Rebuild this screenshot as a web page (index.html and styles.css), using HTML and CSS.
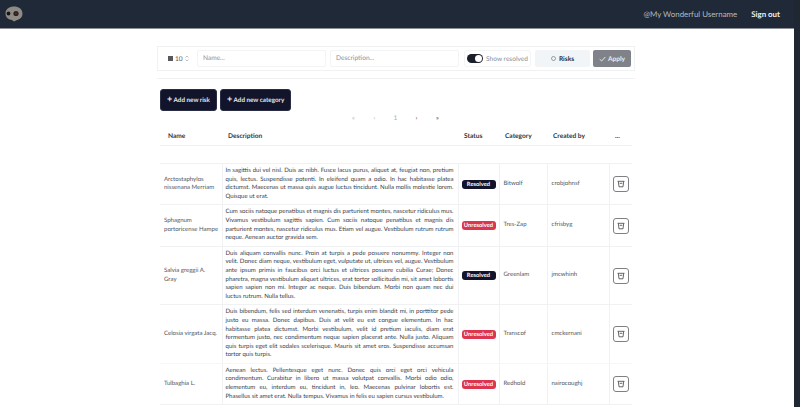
FILE: index.html
```html
<!DOCTYPE html>
<html lang="en">
<head>
    <meta charset="UTF-8">
    <meta name="viewport" content="width=device-width, initial-scale=1.0">
    <title>Risks</title>
    <link rel="stylesheet" href="styles.css">
</head>
<body>
    <nav class="navbar">
        <svg class="logo" width="20" height="20" viewBox="0 0 20 20">
            <path d="M1.500 9.500c0-4.500 4-7 8.500-7s8.500 2.500 8.500 7c0 4-3 6-5.500 6.500l-3 1.500-2-1.500c-3-.5-6.500-2-6.500-6.500z" fill="#8f8a84"/>
            <circle cx="4.500" cy="9.500" r="1.900" fill="#14161a"/>
            <circle cx="12" cy="9.500" r="2.600" fill="#2a2022"/>
            <circle cx="12" cy="9.500" r="1" fill="#5a3030"/>
        </svg>
        <div class="nav-right">
            <span class="username">@My Wonderful Username</span>
            <a class="signout">Sign out</a>
        </div>
    </nav>
    <div class="scrollbar"></div>

    <main class="content">
        <div class="filters">
            <div class="page-size">
                <svg width="5" height="5" viewBox="0 0 5 5"><rect width="5" height="5" fill="#55585c"/></svg>
                <span>10</span>
                <svg width="4" height="7" viewBox="0 0 4 7"><path d="M.5 2.500 2 1l1.500 1.500M.5 4.500 2 6l1.500-1.500" fill="none" stroke="#999" stroke-width=".6"/></svg>
            </div>
            <div class="text-filter">Name...</div>
            <div class="text-filter">Description...</div>
            <div class="toggle-box">
                <span class="toggle"><span class="knob"></span></span>
                <span>Show resolved</span>
            </div>
            <div class="risks-btn">
                <svg width="5" height="5" viewBox="0 0 5 5"><circle cx="2.500" cy="2.500" r="2" fill="none" stroke="#666" stroke-width=".6"/></svg>
                <b>Risks</b>
            </div>
            <div class="apply-btn">
                <svg width="7" height="6" viewBox="0 0 7 6"><path d="M.7 3.200 2.600 5 6.300 1" fill="none" stroke="#e8e8e8" stroke-width="1"/></svg>
                <b>Apply</b>
            </div>
        </div>
        <hr class="divider">

        <div class="actions">
            <button class="dark-btn"><span class="plus">+</span> Add new risk</button>
            <button class="dark-btn"><span class="plus">+</span> Add new category</button>
        </div>

        <div class="pagination">
            <span class="off">«</span>
            <span class="off">‹</span>
            <span class="off">1</span>
            <span>›</span>
            <span>»</span>
        </div>

        <table class="risks">
            <colgroup>
                <col class="c-name"><col class="c-desc"><col class="c-status"><col class="c-cat"><col class="c-user"><col class="c-act">
            </colgroup>
            <thead>
                <tr>
                    <th class="th-name">Name</th>
                    <th>Description</th>
                    <th>Status</th>
                    <th>Category</th>
                    <th>Created by</th>
                    <th>...</th>
                </tr>
            </thead>
            <tbody>
                <tr class="spacer"><td colspan="6"></td></tr>
                <tr>
                    <td>Arctostaphylos nissenana Merriam</td>
                    <td class="desc">In sagittis dui vel nisl. Duis ac nibh. Fusce lacus purus, aliquet at, feugiat non, pretium quis, lectus. Suspendisse potenti. In eleifend quam a odio. In hac habitasse platea dictumst. Maecenas ut massa quis augue luctus tincidunt. Nulla mollis molestie lorem. Quisque ut erat.</td>
                    <td><span class="badge resolved">Resolved</span></td>
                    <td>Bitwolf</td>
                    <td>crobjohnsf</td>
                    <td class="act"><button class="del"><svg width="8" height="8" viewBox="0 0 8 8"><path d="M.6 1.300h6.800M1.300 1.300l.7 5.500h4l.7-5.500M2.700 3.300h2.600" fill="none" stroke="#555" stroke-width=".9"/></svg></button></td>
                </tr>
                <tr>
                    <td>Sphagnum portoricense Hampe</td>
                    <td class="desc">Cum sociis natoque penatibus et magnis dis parturient montes, nascetur ridiculus mus. Vivamus vestibulum sagittis sapien. Cum sociis natoque penatibus et magnis dis parturient montes, nascetur ridiculus mus. Etiam vel augue. Vestibulum rutrum rutrum neque. Aenean auctor gravida sem.</td>
                    <td><span class="badge unresolved">Unresolved</span></td>
                    <td>Tres-Zap</td>
                    <td>cfrisbyg</td>
                    <td class="act"><button class="del"><svg width="8" height="8" viewBox="0 0 8 8"><path d="M.6 1.300h6.800M1.300 1.300l.7 5.500h4l.7-5.500M2.700 3.300h2.600" fill="none" stroke="#555" stroke-width=".9"/></svg></button></td>
                </tr>
                <tr>
                    <td>Salvia greggii A. Gray</td>
                    <td class="desc">Duis aliquam convallis nunc. Proin at turpis a pede posuere nonummy. Integer non velit. Donec diam neque, vestibulum eget, vulputate ut, ultrices vel, augue. Vestibulum ante ipsum primis in faucibus orci luctus et ultrices posuere cubilia Curae; Donec pharetra, magna vestibulum aliquet ultrices, erat tortor sollicitudin mi, sit amet lobortis sapien sapien non mi. Integer ac neque. Duis bibendum. Morbi non quam nec dui luctus rutrum. Nulla tellus.</td>
                    <td><span class="badge resolved">Resolved</span></td>
                    <td>Greenlam</td>
                    <td>jmcwhinh</td>
                    <td class="act"><button class="del"><svg width="8" height="8" viewBox="0 0 8 8"><path d="M.6 1.300h6.800M1.300 1.300l.7 5.500h4l.7-5.500M2.700 3.300h2.600" fill="none" stroke="#555" stroke-width=".9"/></svg></button></td>
                </tr>
                <tr class="no-line">
                    <td>Celosia virgata Jacq.</td>
                    <td class="desc">Duis bibendum, felis sed interdum venenatis, turpis enim blandit mi, in porttitor pede justo eu massa. Donec dapibus. Duis at velit eu est congue elementum. In hac habitasse platea dictumst. Morbi vestibulum, velit id pretium iaculis, diam erat fermentum justo, nec condimentum neque sapien placerat ante. Nulla justo. Aliquam quis turpis eget elit sodales scelerisque. Mauris sit amet eros. Suspendisse accumsan tortor quis turpis.</td>
                    <td><span class="badge unresolved">Unresolved</span></td>
                    <td>Transcof</td>
                    <td>cmckernani</td>
                    <td class="act"><button class="del"><svg width="8" height="8" viewBox="0 0 8 8"><path d="M.6 1.300h6.800M1.300 1.300l.7 5.500h4l.7-5.500M2.700 3.300h2.600" fill="none" stroke="#555" stroke-width=".9"/></svg></button></td>
                </tr>
                <tr>
                    <td>Tulbaghia L.</td>
                    <td class="desc">Aenean lectus. Pellentesque eget nunc. Donec quis orci eget orci vehicula condimentum. Curabitur in libero ut massa volutpat convallis. Morbi odio odio, elementum eu, interdum eu, tincidunt in, leo. Maecenas pulvinar lobortis est. Phasellus sit amet erat. Nulla tempus. Vivamus in felis eu sapien cursus vestibulum.</td>
                    <td><span class="badge unresolved">Unresolved</span></td>
                    <td>Redhold</td>
                    <td>nairocoughj</td>
                    <td class="act"><button class="del"><svg width="8" height="8" viewBox="0 0 8 8"><path d="M.6 1.300h6.800M1.300 1.300l.7 5.500h4l.7-5.500M2.700 3.300h2.600" fill="none" stroke="#555" stroke-width=".9"/></svg></button></td>
                </tr>
            </tbody>
        </table>
    </main>
</body>
</html>
```

FILE: styles.css
```css
body {
    font-family: Lato, "Noto Sans", sans-serif;
    text-rendering: geometricPrecision;
    margin: 0;
    background-color: white;
    color: #3c4149;
    font-size: 6.6px;
}
.navbar {
    display: flex;
    justify-content: space-between;
    align-items: center;
    height: 28px;
    padding: 0 20px 0 4px;
    background-color: #1f2937;
    border-bottom: 1px solid #8a9096;
}
.logo {
    margin-top: -1px;
}
.nav-right {
    display: flex;
    align-items: center;
    gap: 14px;
    font-size: 7.900px;
}
.username {
    color: #b4bac2;
}
.signout {
    color: #eef0f2;
    font-weight: 700;
}
.scrollbar {
    position: fixed;
    top: 0;
    right: 0;
    bottom: 0;
    width: 6px;
    background-color: #1f2733;
}
.content {
    width: 478px;
    margin-left: 157px;
    padding-top: 17px;
}
.filters {
    display: flex;
    align-items: center;
    gap: 4px;
    height: 25px;
    padding: 0 3px;
    box-sizing: border-box;
    border: 1px solid #f0f1f2;
    color: #8a8f96;
}
.page-size {
    display: flex;
    align-items: center;
    gap: 2px;
    width: 32px;
    padding-left: 7px;
    box-sizing: border-box;
    color: #55585c;
}
.text-filter {
    width: 129px;
    height: 17px;
    line-height: 15px;
    padding-left: 5px;
    box-sizing: border-box;
    border: 1px solid #f3f4f5;
    border-radius: 2px;
}
.toggle-box {
    display: flex;
    align-items: center;
    gap: 3px;
    width: 67px;
    height: 17px;
    padding-left: 2px;
    margin-left: 1px;
    box-sizing: border-box;
    border: 1px solid #f3f4f5;
    border-radius: 3px;
    white-space: nowrap;
}
.toggle {
    display: flex;
    justify-content: flex-end;
    align-items: center;
    width: 16px;
    height: 9px;
    padding: 1px;
    box-sizing: border-box;
    background-color: #1b1f2a;
    border-radius: 5px;
}
.knob {
    width: 7px;
    height: 7px;
    background-color: white;
    border-radius: 50%;
}
.risks-btn {
    display: flex;
    justify-content: center;
    align-items: center;
    gap: 3px;
    width: 55px;
    height: 17px;
    background-color: #f1f5f8;
    color: #2b2f36;
    border-radius: 2px;
}
.apply-btn {
    display: flex;
    justify-content: center;
    align-items: center;
    gap: 2px;
    width: 38px;
    height: 17px;
    margin-left: -1px;
    background-color: #7f8389;
    color: #ececec;
    border-radius: 2px;
}
.divider {
    border: 0;
    border-top: 1px solid #f0f1f2;
    margin: 7px 0 0;
}
.actions {
    display: flex;
    gap: 3px;
    margin: 10px 0 0 3px;
}
.dark-btn {
    height: 22px;
    padding: 0 6px;
    border: 1px solid #2a2e44;
    border-radius: 3px;
    background-color: #11142a;
    color: #e6e8ee;
    font-family: inherit;
    font-size: 6.300px;
    font-weight: 700;
    text-rendering: geometricPrecision;
}
.plus {
    font-size: 9px;
    line-height: 6px;
}
.pagination {
    display: flex;
    justify-content: center;
    gap: 15px;
    margin: 3px 0 0 -1px;
    height: 9px;
    line-height: 9px;
    color: #33373d;
}
.pagination span {
    width: 6px;
    text-align: center;
}
.pagination .off {
    color: #a8acb2;
}
.risks {
    width: 472px;
    margin: 4px 0 0 3px;
    border-collapse: collapse;
    table-layout: fixed;
    font-size: 6.050px;
}
.c-name { width: 62px; }
.c-desc { width: 236px; }
.c-status { width: 41px; }
.c-cat { width: 48px; }
.c-user { width: 62px; }
.c-act { width: 23px; }
th {
    height: 18px;
    padding: 0 0 0 6px;
    text-align: left;
    font-size: 6.600px;
    font-weight: 700;
    color: #33373d;
    border-bottom: 1px solid #f0f1f2;
}
.th-name {
    padding-left: 8px;
}
td {
    padding: 0 3px 0 4px;
    line-height: 8.600px;
    border-bottom: 1px solid #f0f1f2;
    border-left: 1px solid #f0f1f2;
    color: #51565e;
}
td:first-child {
    border-left: 0;
}
.no-line td {
    border-bottom-color: #f6f6f7;
}
.spacer td {
    height: 17px;
    padding: 0;
    border-left: 0;
}
.desc {
    padding: 3px 4px 3px 3px;
    text-align: justify;
    color: #3c4149;
}
.act {
    padding: 0 0 0 3px;
}
.badge {
    display: block;
    width: 34px;
    height: 9px;
    margin-left: -1px;
    line-height: 9px;
    text-align: center;
    font-size: 5.800px;
    font-weight: 700;
    color: white;
    border-radius: 3px;
}
.resolved {
    background-color: #11142a;
}
.unresolved {
    background-color: #dc3550;
}
.del {
    display: flex;
    justify-content: center;
    align-items: center;
    width: 16px;
    height: 16px;
    padding: 0;
    background: white;
    border: 1px solid #7d8084;
    border-radius: 3px;
}
```
